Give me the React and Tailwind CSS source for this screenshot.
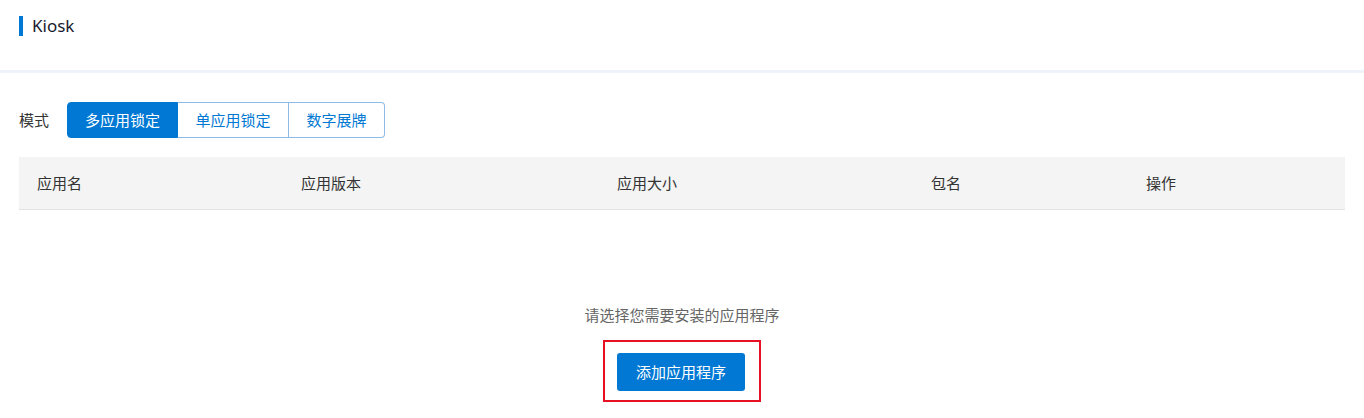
export default function App() {
  const font = { fontFamily: '"Noto Sans CJK SC", "Noto Sans", sans-serif' };
  return (
    <div className="w-[1364px] h-[418px] bg-white overflow-hidden" style={font}>
      <div className="h-[70px] flex items-start pt-[16px] pl-[19px]">
        <div className="w-[4px] h-[20px] bg-[#0078d4]" />
        <span className="ml-[9px] text-[17px] leading-[20px] text-[#1a1a2e]" style={{ fontFamily: '"Noto Sans", "Noto Sans CJK SC", sans-serif' }}>Kiosk</span>
      </div>
      <div className="h-[3px] bg-[#eef4f9]" />
      <div className="px-[19px]">
        <div className="mt-[29px] flex items-center">
          <span className="text-[15px] text-[#333] w-[48px]">模式</span>
          <div className="flex h-[36px] text-[15px]">
            <div className="w-[111px] flex items-center justify-center bg-[#0078d4] text-white rounded-l-[4px] border border-[#0078d4]">多应用锁定</div>
            <div className="w-[111px] flex items-center justify-center text-[#0078d4] border-y border-r border-[#8cbbe6]">单应用锁定</div>
            <div className="w-[96px] flex items-center justify-center text-[#0078d4] border-y border-r border-[#8cbbe6] rounded-r-[4px]">数字展牌</div>
          </div>
        </div>
        <div className="mt-[19px] h-[53px] bg-[#f4f4f4] border-b border-[#e3e3e3] flex items-center text-[15px] text-[#333]">
          <div className="w-[264px] pl-[18px]">应用名</div>
          <div className="w-[316px] pl-[18px]">应用版本</div>
          <div className="w-[314px] pl-[18px]">应用大小</div>
          <div className="w-[215px] pl-[18px]">包名</div>
          <div className="flex-1 pl-[18px]">操作</div>
        </div>
        <div className="flex flex-col items-center">
          <div className="mt-[95px] text-[15px] leading-[20px] text-[#666]">请选择您需要安装的应用程序</div>
          <div className="mt-[15px] border-2 border-[#e81123] pl-[12px] pr-[14px] pt-[11px] pb-[9px]">
            <button className="w-[128px] h-[38px] bg-[#0078d4] text-white text-[15px] rounded-[3px]">添加应用程序</button>
          </div>
        </div>
      </div>
    </div>
  );
}
